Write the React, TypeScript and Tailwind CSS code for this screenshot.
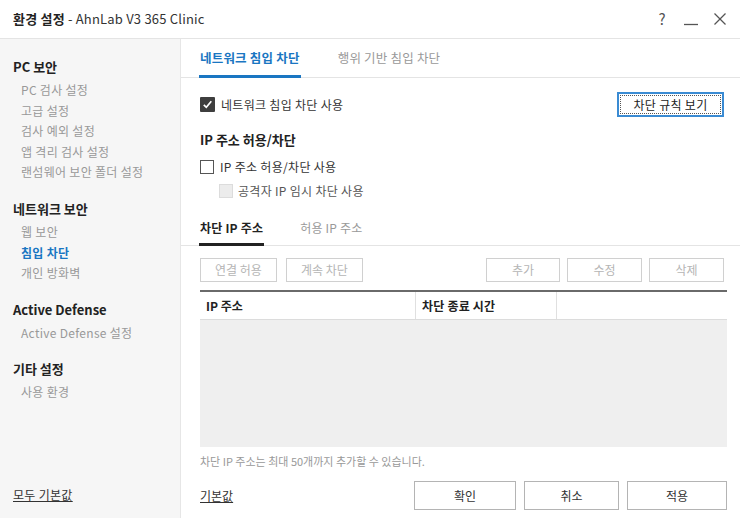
import React from "react";

const font = { fontFamily: '"Noto Sans CJK KR", "Noto Sans", sans-serif' };

function SideHeader({ children, className = "" }: { children: React.ReactNode; className?: string }) {
  return <div className={`h-[20px] leading-[20px] text-[13px] font-bold text-[#222] ${className}`}>{children}</div>;
}

function SideItem({ children, active = false }: { children: React.ReactNode; active?: boolean }) {
  return (
    <div
      className={`h-[20.5px] leading-[20.5px] pl-[8px] text-[12px] tracking-[0.3px] ${
        active ? "text-[#1a76c2] font-bold" : "text-[#999]"
      }`}
    >
      {children}
    </div>
  );
}

function DisabledBtn({ children, w }: { children: React.ReactNode; w: string }) {
  return (
    <div className={`${w} h-[24px] border border-[#d0d0d0] flex items-center justify-center text-[12px] text-[#b5b5b5] bg-white`}>
      {children}
    </div>
  );
}

function FooterBtn({ children, w }: { children: React.ReactNode; w: string }) {
  return (
    <div className={`${w} h-[29px] border border-[#b4b4b4] flex items-center justify-center text-[12px] text-[#333] bg-white`}>
      {children}
    </div>
  );
}

export default function App() {
  return (
    <div style={font} className="w-[740px] h-[518px] bg-white flex flex-col overflow-hidden text-[#333]">
      {/* Title bar */}
      <div className="h-[39px] border-b border-[#e4e4e4] flex items-center pl-[13px] pr-[13px] shrink-0">
        <div className="text-[13px] text-[#333] tracking-[0.2px]">
          <span className="font-bold text-[#222]">환경 설정</span>
          <span> - AhnLab V3 365 Clinic</span>
        </div>
        <div className="ml-auto flex items-center">
          <span className="text-[15px] text-[#555] w-[14px] text-center">?</span>
          <svg width="16" height="16" viewBox="0 0 16 16" className="ml-[14px]">
            <line x1="1" y1="13.5" x2="15" y2="13.5" stroke="#555" strokeWidth="1.3" />
          </svg>
          <svg width="14" height="14" viewBox="0 0 14 14" className="ml-[14px]">
            <line x1="1.5" y1="1.5" x2="12.5" y2="12.5" stroke="#555" strokeWidth="1.2" />
            <line x1="12.5" y1="1.5" x2="1.5" y2="12.5" stroke="#555" strokeWidth="1.2" />
          </svg>
        </div>
      </div>

      <div className="flex flex-1 min-h-0">
        {/* Sidebar */}
        <div className="w-[181px] shrink-0 bg-[#f6f6f6] border-r border-[#e6e6e6] flex flex-col pl-[13px] pt-[18px] pb-[13px]">
          <SideHeader>PC 보안</SideHeader>
          <div className="mt-[3px]">
            <SideItem>PC 검사 설정</SideItem>
            <SideItem>고급 설정</SideItem>
            <SideItem>검사 예외 설정</SideItem>
            <SideItem>앱 격리 검사 설정</SideItem>
            <SideItem>랜섬웨어 보안 폴더 설정</SideItem>
          </div>
          <SideHeader className="mt-[16.5px]">네트워크 보안</SideHeader>
          <div className="mt-[3px]">
            <SideItem>웹 보안</SideItem>
            <SideItem active>침입 차단</SideItem>
            <SideItem>개인 방화벽</SideItem>
          </div>
          <SideHeader className="mt-[16.5px]">Active Defense</SideHeader>
          <div className="mt-[3px]">
            <SideItem>Active Defense 설정</SideItem>
          </div>
          <SideHeader className="mt-[15.5px]">기타 설정</SideHeader>
          <div className="mt-[3px]">
            <SideItem>사용 환경</SideItem>
          </div>
          <div className="mt-auto h-[20px] leading-[20px] text-[12px] text-[#333] underline tracking-[0.3px]">모두 기본값</div>
        </div>

        {/* Content */}
        <div className="flex-1 flex flex-col min-w-0">
          {/* Top tabs */}
          <div className="h-[39px] border-b border-[#e4e4e4] flex pl-[18px] shrink-0">
            <div className="relative h-full flex items-center px-[1px] text-[12.5px] font-bold text-[#1a76c2] tracking-[0.2px]">
              네트워크 침입 차단
              <div className="absolute left-0 right-0 bottom-[-1px] h-[3px] bg-[#1a76c2]" />
            </div>
            <div className="h-full flex items-center ml-[37px] text-[12.5px] text-[#999] tracking-[0.2px]">행위 기반 침입 차단</div>
          </div>

          <div className="pl-[19px] pr-[16px]">
            {/* Row 1 */}
            <div className="mt-[14px] h-[25px] flex items-center">
              <div className="w-[15px] h-[15px] bg-[#3e3e3e] rounded-[1px] flex items-center justify-center">
                <svg width="11" height="11" viewBox="0 0 11 11">
                  <path d="M1.8 5.8 L4.3 8.3 L9.3 2.3" stroke="#fff" strokeWidth="1.7" fill="none" />
                </svg>
              </div>
              <span className="ml-[6px] text-[12px] text-[#333] tracking-[0.3px]">네트워크 침입 차단 사용</span>
              <div className="ml-auto w-[107px] h-[25px] border-2 border-[#3a8bd3] p-[1px] bg-white">
                <div className="w-full h-full border border-dotted border-[#555] flex items-center justify-center text-[12px] text-[#222] tracking-[0.3px]">
                  차단 규칙 보기
                </div>
              </div>
            </div>

            <div className="mt-[13px] h-[20px] leading-[20px] text-[13px] font-bold text-[#222]">IP 주소 허용/차단</div>

            <div className="mt-[7px] h-[20px] flex items-center">
              <div className="w-[14px] h-[14px] border border-[#555] bg-white" />
              <span className="ml-[6px] text-[12px] text-[#333] tracking-[0.3px]">IP 주소 허용/차단 사용</span>
            </div>

            <div className="mt-[4px] h-[20px] flex items-center pl-[19px]">
              <div className="w-[14px] h-[14px] border border-[#dcdcdc] bg-[#ececec]" />
              <span className="ml-[5px] text-[12px] text-[#555] tracking-[0.3px]">공격자 IP 임시 차단 사용</span>
            </div>
          </div>

          {/* Sub tabs */}
          <div className="mt-[9px] h-[36px] border-b border-[#e4e4e4] flex pl-[18px] shrink-0">
            <div className="relative h-full flex items-center px-[1px] text-[12px] font-bold text-[#222] tracking-[0.2px]">
              차단 IP 주소
              <div className="absolute left-0 right-0 bottom-[-1px] h-[3px] bg-[#222]" />
            </div>
            <div className="h-full flex items-center ml-[36px] text-[12px] text-[#999] tracking-[0.2px]">허용 IP 주소</div>
          </div>

          <div className="pl-[19px] pr-[13px] flex flex-col">
            {/* Button row */}
            <div className="mt-[12px] flex pr-[3px]">
              <DisabledBtn w="w-[77px]">연결 허용</DisabledBtn>
              <div className="ml-[9px]">
                <DisabledBtn w="w-[77px]">계속 차단</DisabledBtn>
              </div>
              <div className="ml-auto flex gap-[7px]">
                <DisabledBtn w="w-[74px]">추가</DisabledBtn>
                <DisabledBtn w="w-[75px]">수정</DisabledBtn>
                <DisabledBtn w="w-[75px]">삭제</DisabledBtn>
              </div>
            </div>

            {/* Table */}
            <div className="mt-[8px] border-t-2 border-[#6a6a6a]">
              <div className="h-[28px] flex border-b border-[#dcdcdc] text-[12px] font-bold text-[#222]">
                <div className="w-[216px] border-r border-[#e0e0e0] flex items-center pl-[6px]">IP 주소</div>
                <div className="w-[141px] border-r border-[#e0e0e0] flex items-center pl-[6px] tracking-[0.2px]">차단 종료 시간</div>
                <div className="flex-1" />
              </div>
              <div className="h-[127px] bg-[#efefef]" />
            </div>

            <div className="mt-[6px] h-[16px] leading-[16px] text-[11px] text-[#999]">
              차단 IP 주소는 최대 50개까지 추가할 수 있습니다.
            </div>

            {/* Footer */}
            <div className="mt-[12px] flex items-center">
              <span className="text-[12px] text-[#333] underline">기본값</span>
              <div className="ml-auto flex gap-[8px]">
                <FooterBtn w="w-[102px]">확인</FooterBtn>
                <FooterBtn w="w-[95px]">취소</FooterBtn>
                <FooterBtn w="w-[100px]">적용</FooterBtn>
              </div>
            </div>
          </div>
        </div>
      </div>
    </div>
  );
}
